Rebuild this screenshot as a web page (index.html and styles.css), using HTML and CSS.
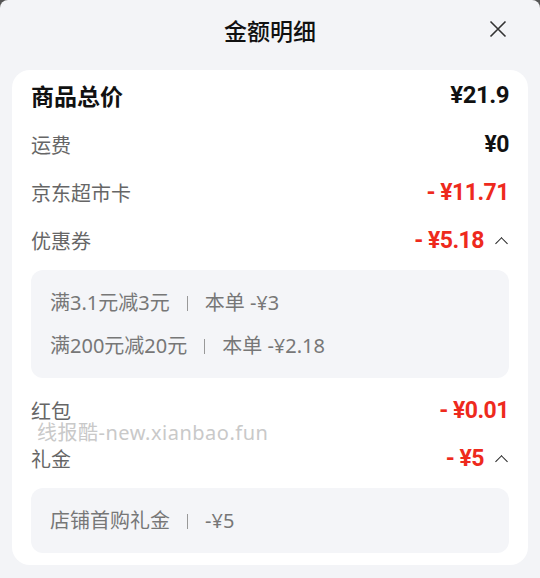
FILE: index.html
```html
<!DOCTYPE html>
<html lang="zh-CN">

<head>
    <meta charset="UTF-8">
    <meta name="viewport" content="width=device-width, initial-scale=1.0">
    <title>金额明细</title>
    <link rel="stylesheet" href="styles.css">
</head>

<body>
    <div class="sheet">
        <div class="header">
            <h1>金额明细</h1>
            <span class="close">
                <svg width="18" height="18" viewBox="0 0 18 18">
                    <path d="M1.5 1.5 L16.5 16.5 M16.5 1.5 L1.5 16.5" stroke="#333" stroke-width="1.6" fill="none" />
                </svg>
            </span>
        </div>

        <div class="card">
            <div class="row total">
                <span class="label">商品总价</span>
                <span class="value">¥21.9</span>
            </div>
            <div class="row">
                <span class="label">运费</span>
                <span class="value">¥0</span>
            </div>
            <div class="row">
                <span class="label">京东超市卡</span>
                <span class="value red">- ¥11.71</span>
            </div>
            <div class="row">
                <span class="label">优惠券</span>
                <span class="value red">- ¥5.18<i class="caret"></i></span>
            </div>
            <div class="detail">
                <p>满3.1元减3元<i class="sep"></i>本单 -¥3</p>
                <p>满200元减20元<i class="sep"></i>本单 -¥2.18</p>
            </div>
            <div class="row gap">
                <span class="label">红包</span>
                <span class="value red">- ¥0.01</span>
            </div>
            <div class="row">
                <span class="label">礼金</span>
                <span class="value red">- ¥5<i class="caret"></i></span>
            </div>
            <div class="detail">
                <p>店铺首购礼金<i class="sep"></i>-¥5</p>
            </div>

            <div class="watermark">线报酷-new.xianbao.fun</div>
        </div>
    </div>
</body>

</html>
```

FILE: styles.css
```css
* {
    margin: 0;
    padding: 0;
    box-sizing: border-box;
}

body {
    background-color: #555;
    font-family: "Noto Sans", "Noto Sans CJK SC", sans-serif;
}

.sheet {
    width: 540px;
    height: 578px;
    background-color: #f3f4f7;
    border-radius: 8px 8px 0 0;
    overflow: hidden;
}

.header {
    height: 60px;
    display: flex;
    align-items: center;
    justify-content: center;
    position: relative;
}

.header h1 {
    font-family: "Noto Sans CJK SC", sans-serif;
    font-size: 23px;
    font-weight: 500;
    color: #111;
}

.close {
    position: absolute;
    right: 33px;
    top: 20px;
    width: 18px;
    height: 18px;
}

.card {
    position: relative;
    margin: 10px 12px 0;
    background-color: #fff;
    border-radius: 18px;
    padding: 0 19px 12px;
}

.row {
    height: 48px;
    display: flex;
    align-items: center;
    justify-content: space-between;
}

.row.gap {
    margin-top: 8px;
}

.label {
    font-family: "Noto Sans CJK SC", sans-serif;
    font-size: 20px;
    color: #666;
}

.total {
    height: 50px;
}

.total .label {
    font-size: 23px;
    font-weight: bold;
    color: #111;
}

.value {
    display: flex;
    align-items: center;
    font-family: Roboto, "Noto Sans CJK SC", sans-serif;
    font-size: 23px;
    font-weight: bold;
    color: #111;
    letter-spacing: -0.5px;
}

.total .value {
    font-size: 24px;
}

.value.red {
    color: #ee2a1d;
}

.caret {
    display: block;
    width: 9px;
    height: 9px;
    border-left: 1.5px solid #222;
    border-top: 1.5px solid #222;
    transform: rotate(45deg);
    margin: 6px 3px 0 13px;
}

.detail {
    margin: 6px 0 0;
    background-color: #f4f5f8;
    border-radius: 12px;
    padding: 11px 19px;
}

.detail p {
    height: 43px;
    line-height: 43px;
    font-size: 20px;
    color: #777;
}

.sep {
    display: inline-block;
    width: 1px;
    height: 15px;
    background-color: #999;
    margin: 0 17px;
    vertical-align: -1px;
}

.watermark {
    position: absolute;
    left: 25px;
    top: 347px;
    font-size: 20px;
    letter-spacing: 0.5px;
    color: #c9c9c9;
}
```
